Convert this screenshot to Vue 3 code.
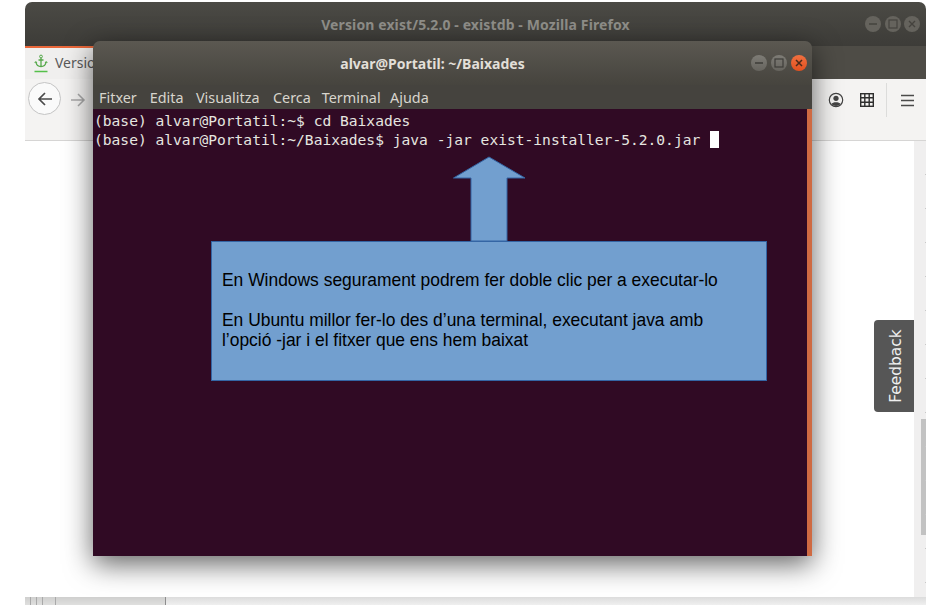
<script setup>
const menus = ['Fitxer', 'Edita', 'Visualitza', 'Cerca', 'Terminal', 'Ajuda']
const ticks = Array.from({ length: 14 }, (_, i) => i)
const marks = [5, 11, 17, 30, 140]
</script>

<template>
  <div class="desktop">
    <section class="browser">
      <header class="b-title">
        <span class="b-title-text">Version exist/5.2.0 - existdb - Mozilla Firefox</span>
        <div class="b-controls">
          <span class="wb"><svg width="16" height="16" viewBox="0 0 16 16"><path d="M4 8h8" stroke="#45433e" stroke-width="1.5"/></svg></span>
          <span class="wb"><svg width="16" height="16" viewBox="0 0 16 16"><rect x="4" y="4" width="8" height="8" fill="none" stroke="#45433e" stroke-width="1.2"/></svg></span>
          <span class="wb"><svg width="16" height="16" viewBox="0 0 16 16"><path d="M5 5l6 6M11 5l-6 6" stroke="#45433e" stroke-width="1.4"/></svg></span>
        </div>
      </header>
      <div class="b-tabs">
        <div class="tab">
          <svg class="anchor" width="14" height="19" viewBox="0 0 14 19">
            <circle cx="7" cy="2.500" r="1.400" fill="none" stroke="#55a84a" stroke-width="1"/>
            <path d="M7 4v8.500M4.500 6h5" fill="none" stroke="#55a84a" stroke-width="1.300"/>
            <path d="M2 8.500c.5 2.700 2.500 4 5 4s4.500-1.300 5-4" fill="none" stroke="#55a84a" stroke-width="1.300"/>
            <path d="M0 8.500l2-1.500 1.500 2.200zM14 8.500l-2-1.500-1.500 2.200z" fill="#55a84a"/>
            <path d="M0.500 17.500h13" stroke="#55c04a" stroke-width="1.400"/>
          </svg>
          <span class="tab-label">Version</span>
        </div>
      </div>
      <div class="b-toolbar">
        <span class="back">
          <svg width="18" height="18" viewBox="0 0 18 18"><path d="M16 9H3M9 3L3 9l6 6" fill="none" stroke="#4a4a4a" stroke-width="1.700"/></svg>
        </span>
        <svg class="fwd" width="18" height="18" viewBox="0 0 18 18"><path d="M2 9h13M9 3l6 6-6 6" fill="none" stroke="#a8a8a8" stroke-width="1.500"/></svg>
        <div class="tools">
          <svg width="16" height="16" viewBox="0 0 16 16"><circle cx="8" cy="8" r="6.700" fill="none" stroke="#444" stroke-width="1.200"/><circle cx="8" cy="6.300" r="2.600" fill="#444"/><path d="M3.500 12c1-2.500 8-2.500 9 0-2 2.500-7 2.500-9 0z" fill="#444"/></svg>
          <svg class="grid-ic" width="14" height="14" viewBox="0 0 14 14"><rect x="0.700" y="0.700" width="12.600" height="12.600" fill="none" stroke="#2e2e2e" stroke-width="1.400"/><path d="M4.800 0v14M9.200 0v14M0 4.800h14M0 9.200h14" stroke="#2e2e2e" stroke-width="1.400"/></svg>
          <i class="sep"></i>
          <svg class="ham" width="13" height="13" viewBox="0 0 13 13"><path d="M0 1.500h13M0 6.500h13M0 11.500h13" stroke="#4a4a4a" stroke-width="1.500"/></svg>
        </div>
      </div>
      <div class="b-content">
        <div class="page">
          <div class="feedback"><span>Feedback</span></div>
        </div>
        <div class="scrollbar"><i class="thumb"></i></div>
        <div class="ticks"><i v-for="t in ticks" :key="t"></i></div>
      </div>
    </section>

    <div class="strip">
      <i v-for="m in marks" :key="m" :style="{ left: m + 'px' }"></i>
      <div class="strip-light"></div>
    </div>

    <section class="terminal">
      <header class="t-title">
        <span class="t-title-text">alvar@Portatil: ~/Baixades</span>
        <div class="t-controls">
          <span class="wt"><svg width="16" height="16" viewBox="0 0 16 16"><path d="M4 8h8" stroke="#3e3d39" stroke-width="1.500"/></svg></span>
          <span class="wt"><svg width="16" height="16" viewBox="0 0 16 16"><rect x="4" y="4" width="8" height="8" fill="none" stroke="#3e3d39" stroke-width="1.200"/></svg></span>
          <span class="wt close"><svg width="16" height="16" viewBox="0 0 16 16"><path d="M5 5l6 6M11 5l-6 6" stroke="#4a2a1a" stroke-width="1.500"/></svg></span>
        </div>
      </header>
      <nav class="t-menu">
        <span v-for="m in menus" :key="m">{{ m }}</span>
      </nav>
      <div class="t-body">
        <pre class="shell">(base) alvar@Portatil:~$ cd Baixades
(base) alvar@Portatil:~/Baixades$ java -jar exist-installer-5.2.0.jar <i class="cursor"></i></pre>
        <div class="t-scroll"></div>
        <svg class="arrow" width="76" height="88" viewBox="0 0 76 88">
          <path d="M37 2L1.500 23H19V86H55V23H73z" fill="#729fcf" stroke="#3465a4" stroke-width="1"/>
        </svg>
        <div class="note">
          <p>En Windows segurament podrem fer doble clic per a executar-lo</p>
          <p>&nbsp;</p>
          <p>En Ubuntu millor fer-lo des d’una terminal, executant java amb<br>l’opció -jar i el fitxer que ens hem baixat</p>
        </div>
      </div>
    </section>
  </div>
</template>

<style>
html, body { margin: 0; background: #fff; overflow: hidden; }
</style>

<style scoped>
.desktop { position: relative; width: 945px; height: 605px; overflow: hidden; background: #fff; }

.browser {
  position: absolute; left: 25px; top: 2px; width: 901px; height: 595px;
  display: flex; flex-direction: column; border-radius: 7px 7px 0 0; overflow: hidden; background: #fff;
}
.b-title {
  height: 44px; flex: none; position: relative; display: flex; align-items: center; justify-content: center;
  background: linear-gradient(#4b4a45, #3d3c38);
}
.b-title-text { font: 700 14px "Noto Sans", sans-serif; color: #8f8e89; letter-spacing: .11px; }
.b-controls { position: absolute; right: 6px; top: 14px; display: flex; gap: 3.500px; }
.wb { width: 16px; height: 16px; border-radius: 50%; background: #65635d; display: block; }
.wb svg, .wt svg { display: block; }

.b-tabs { height: 33px; flex: none; background: #4e4c46; display: flex; }
.tab {
  width: 120px; background: #f0efee; border-top: 2px solid #e9673a; box-sizing: border-box;
  display: flex; align-items: center; padding-left: 9px; gap: 7px;
}
.anchor { flex: none; }
.tab-label { font: 14px "Noto Sans", sans-serif; color: #5a5a5a; margin-top: -3px; }

.b-toolbar {
  height: 62px; flex: none; box-sizing: border-box; background: #f4f3f2; border-bottom: 1px solid #d6d5d4;
  display: flex; align-items: flex-start; padding: 3px 12px 0 3px;
}
.back {
  width: 31px; height: 31px; border: 1.500px solid #c4c4c4; border-radius: 50%; background: #fafafa;
  display: flex; align-items: center; justify-content: center; flex: none;
}
.fwd { margin: 9px 0 0 8px; flex: none; }
.tools { margin-left: auto; display: flex; align-items: center; height: 36px; }
.grid-ic { margin-left: 16px; }
.sep { display: block; width: 1px; height: 34px; background: #dcdcdb; margin: 0 14px 0 12px; }

.b-content { flex: 1; display: flex; position: relative; min-height: 0; }
.page { flex: 1; position: relative; background: #fff; }
.feedback {
  position: absolute; right: 0; top: 179px; width: 40px; height: 92px; box-sizing: border-box; padding-left: 3px;
  background: #565656;
  border-radius: 4px 0 0 4px; display: flex; align-items: center; justify-content: center;
}
.feedback span {
  font: 15.400px "DejaVu Sans", sans-serif; color: #efefef; transform: rotate(-90deg); white-space: nowrap; display: block;
}
.scrollbar { width: 12px; flex: none; background: #f0efef; position: relative; }
.thumb { position: absolute; right: 0; top: 278px; width: 5px; height: 116px; background: #c2c2c2; display: block; }
.ticks { position: absolute; right: 0; top: 0; bottom: 0; width: 1px; display: flex; flex-direction: column; }
.ticks i { display: block; height: 33px; border-bottom: 1px solid #c8c8c8; flex: none; }

.strip {
  position: absolute; left: 25px; top: 597px; width: 901px; height: 8px;
  background: linear-gradient(#cfcfce, #dfdfde);
}
.strip i { position: absolute; top: 0; bottom: 0; width: 1px; background: #a9a9a9; }
.strip i:last-of-type { width: 2px; background: #8d8d8d; }
.strip-light { position: absolute; left: 141px; right: 0; top: 0; bottom: 0; background: linear-gradient(#dcdcdc, #efefef); }

.terminal {
  position: absolute; left: 93px; top: 41px; width: 719px; height: 515px;
  display: flex; flex-direction: column; border-radius: 7px 7px 0 0;
  box-shadow: 0 8px 28px rgba(0, 0, 0, .62);
}
.t-title {
  height: 44px; flex: none; position: relative; display: flex; align-items: center; justify-content: center;
  padding-right: 40px; box-sizing: border-box;
  background: linear-gradient(#5b5851, #46443e); border-radius: 7px 7px 0 0;
}
.t-title-text { font: 700 14px "Noto Sans", sans-serif; color: #e2dfd8; }
.t-controls { position: absolute; right: 5px; top: 14px; display: flex; gap: 4px; }
.wt { width: 16px; height: 16px; border-radius: 50%; background: linear-gradient(#7e7c76, #66645e); display: block; }
.close { background: linear-gradient(#f07040, #e2501f); }
.t-menu {
  height: 24px; flex: none; background: #45433e; display: flex; gap: 11.400px; padding: 0 0 0 6px; align-items: center;
  font: 14.400px "Noto Sans", sans-serif; color: #d8d5cd;
}
.t-menu span:nth-child(2) { margin-left: 1.500px; }
.t-menu span:nth-child(3) { margin-left: 1px; }
.t-menu span:nth-child(4) { margin-left: 2px; }
.t-menu span:nth-child(5) { margin-left: -.500px; }
.t-menu span:nth-child(6) { margin-left: -2px; }
.t-body { flex: 1; position: relative; background: #300a24; min-height: 0; }
.shell {
  margin: 0; padding: 1.500px 0 0 1px; font: 14.600px/19px "DejaVu Sans Mono", monospace; color: #e6e6e0;
}
.cursor { display: inline-block; width: 9px; height: 17px; background: #fff; vertical-align: -3px; margin-left: 1px; }
.t-scroll { position: absolute; right: 0; top: 0; bottom: 0; width: 5px; background: #cf6a42; }
.arrow { position: absolute; left: 359px; top: 46px; }
.note {
  position: absolute; left: 118px; top: 132px; width: 556px; height: 140px; box-sizing: border-box;
  background: #729fcf; border: 1px solid #3465a4; padding: 0 10px 2px;
  display: flex; flex-direction: column; justify-content: center;
  font: 17.430px/20px "Liberation Sans", sans-serif; color: #000;
}
.note p { margin: 0; }
</style>
